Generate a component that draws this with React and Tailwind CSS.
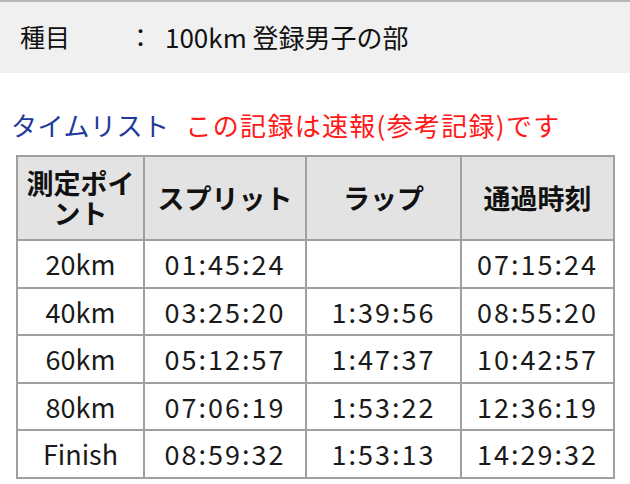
const rows = [
  ["20km", "01:45:24", "", "07:15:24"],
  ["40km", "03:25:20", "1:39:56", "08:55:20"],
  ["60km", "05:12:57", "1:47:37", "10:42:57"],
  ["80km", "07:06:19", "1:53:22", "12:36:19"],
  ["Finish", "08:59:32", "1:53:13", "14:29:32"],
];

export default function App() {
  return (
    <div
      className="h-[484px] w-[630px] overflow-hidden bg-white text-[#111]"
      style={{ fontFamily: '"Noto Sans CJK JP", "Noto Sans", sans-serif' }}
    >
      {/* event bar */}
      <div className="flex h-[73px] items-center border-t-2 border-[#b8b8b8] bg-[#f0f0f0] pb-[2px] pl-[20px] text-[25px]">
        <span className="w-[108px]">種目</span>
        <span className="w-[37px]">：</span>
        <span className="text-[26px]">100km 登録男子の部</span>
      </div>

      {/* title */}
      <div className="mt-[36px] flex items-center pl-[11px] text-[26px] leading-[32px]">
        <span className="tracking-[0.5px] text-[#21399a]">タイムリスト</span>
        <span className="ml-[16px] tracking-[1.3px] text-[#ff1a1a]">この記録は速報(参考記録)です</span>
      </div>

      {/* time table */}
      <table className="ml-[16px] mt-[14px] w-[597px] table-fixed border-collapse text-center">
        <colgroup>
          <col className="w-[127px]" />
          <col className="w-[162px]" />
          <col className="w-[155px]" />
          <col className="w-[153px]" />
        </colgroup>
        <thead>
          <tr className="h-[84px] bg-[#e3e3e3] text-[27px] font-bold leading-[30px]">
            <th className="border-2 border-[#a0a0a0] px-1">測定ポイント</th>
            <th className="border-2 border-[#a0a0a0]">スプリット</th>
            <th className="border-2 border-[#a0a0a0]">ラップ</th>
            <th className="border-2 border-[#a0a0a0]">通過時刻</th>
          </tr>
        </thead>
        <tbody>
          {rows.map((r) => (
            <tr key={r[0]} className="h-[47.5px] text-[27px] text-[#1a1a1a]">
              {r.map((c, i) => (
                <td
                  key={i}
                  className={
                    i === 0
                      ? "border-2 border-[#a0a0a0] p-0 leading-none"
                      : "border-2 border-[#a0a0a0] p-0 leading-none tracking-[2px]"
                  }
                >
                  {c}
                </td>
              ))}
            </tr>
          ))}
        </tbody>
      </table>
    </div>
  );
}
